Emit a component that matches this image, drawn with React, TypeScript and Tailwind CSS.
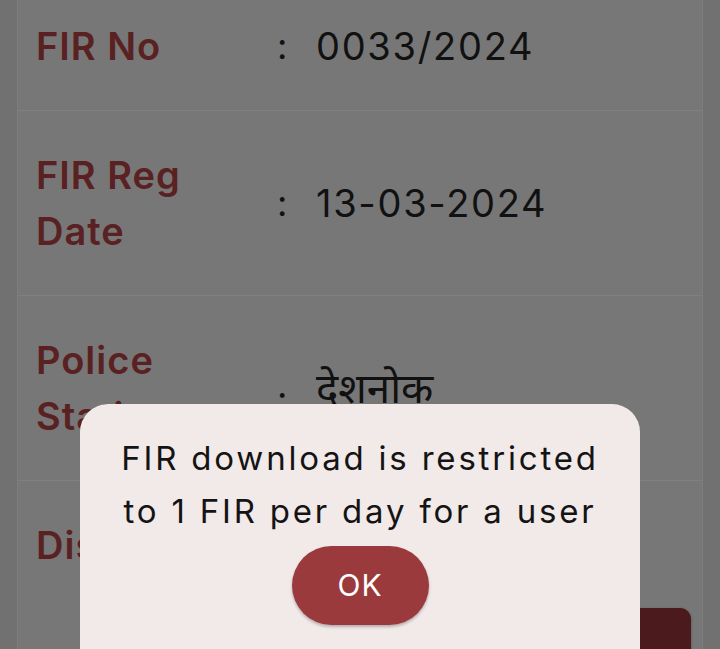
import React from "react";

const rows = [
  { label: ["FIR No"], value: "0033/2024", deva: false },
  { label: ["FIR Reg", "Date"], value: "13-03-2024", deva: false },
  { label: ["Police", "Station"], value: "देशनोक", deva: true },
  { label: ["District"], value: "", deva: true },
];

export default function App() {
  return (
    <div className="relative w-[720px] h-[649px] overflow-hidden bg-[#717171]">
      <div className="mx-[17px] mt-[-18px] border-x border-[#7d7d7d] bg-[#777777]">
        {rows.map((r, i) => {
          const last = i === rows.length - 1;
          return (
            <div
              key={i}
              className={
                "flex items-center pl-[18px] " +
                (last ? "pt-[36px]" : "py-[36px] border-b border-[#808080]")
              }
            >
              <div
                className="w-[241px] text-[38px] leading-[56px] font-semibold tracking-[1px] text-[#5a2122]"
                style={{ fontFamily: "Inter, 'Noto Sans', sans-serif" }}
              >
                {r.label.map((l, j) => (
                  <div key={j}>{l}</div>
                ))}
              </div>
              {r.value && (
                <div
                  className="flex items-center leading-[56px] text-[#111111]"
                  style={{ fontFamily: "Inter, 'Noto Sans', sans-serif" }}
                >
                  <span className={"w-[39px] text-[36px] relative " + (r.deva ? "top-[11px]" : "")}>:</span>
                  <span className={r.deva ? "text-[42px]" : "text-[38px] tracking-[1.7px]"}>
                    {r.value}
                  </span>
                </div>
              )}
            </div>
          );
        })}
        <div className="flex justify-end pr-[11px] pt-[35px] pb-[40px]">
          <div className="w-[130px] h-[60px] rounded-[11px] bg-[#4a1a1c] shadow-[0_1px_3px_rgba(0,0,0,0.3)]" />
        </div>
      </div>

      <div className="absolute left-[80px] top-[404px] w-[560px] h-[300px] rounded-[28px] bg-[#f2e9e9] pt-[28px] flex flex-col items-center">
        <div
          className="text-center text-[33px] leading-[53px] tracking-[2.8px] text-[#141414]"
          style={{ fontFamily: "Inter, 'Noto Sans', sans-serif" }}
        >
          <div>FIR download is restricted</div>
          <div>to 1 FIR per day for a user</div>
        </div>
        <button
          className="mt-[8px] w-[137px] h-[79px] rounded-full bg-[#9b3a3c] text-white text-[30px] leading-[79px] tracking-[1px] shadow-[0_2px_3px_rgba(0,0,0,0.25)]"
          style={{ fontFamily: "Inter, 'Noto Sans', sans-serif" }}
        >
          OK
        </button>
      </div>
    </div>
  );
}
